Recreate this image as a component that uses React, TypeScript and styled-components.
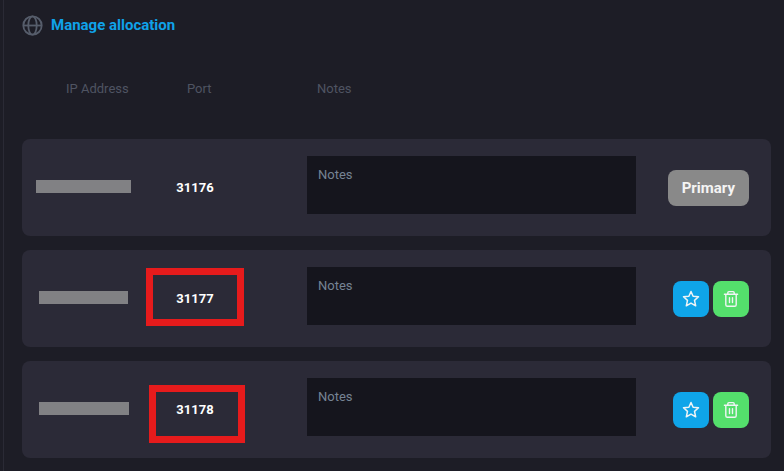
import React from "react";
import styled, { createGlobalStyle } from "styled-components";

const GlobalStyle = createGlobalStyle`
  * { box-sizing: border-box; }
  body {
    margin: 0;
    background: #1d1d26;
    color: #fff;
    font-family: Roboto, "Liberation Sans", sans-serif;
    font-size: 13px;
  }
`;

const Panel = styled.main`
  min-height: 100vh;
  margin-left: 3px;
  padding: 15px 13px 12px 18px;
  border-left: 1px solid #2a2a35;
`;

const Header = styled.header`
  display: flex;
  align-items: flex-start;
  gap: 8px;
  height: 21px;
  color: #565d6b;
`;

const Title = styled.h1`
  margin: 0;
  color: #0fa2e9;
  font-size: 15px;
  line-height: 20px;
  font-weight: 700;
`;

const Table = styled.table`
  display: block;
  margin-top: 43px;
`;

const TableHead = styled.thead`
  display: block;
`;

const TableBody = styled.tbody`
  display: flex;
  flex-direction: column;
  gap: 14px;
  margin-top: 40px;
`;

const Row = styled.tr`
  display: grid;
  grid-template-columns: 123px 100px minmax(0, 1fr) 135px;
`;

const Card = styled(Row)`
  align-items: center;
  min-height: 97px;
  border-radius: 8px;
  background: #2b2a37;
`;

const HeadCell = styled.th<{ $indent: number }>`
  padding: 0 0 0 ${(p) => p.$indent}px;
  color: #4f5462;
  font-weight: 400;
  line-height: 20px;
  text-align: left;
  white-space: nowrap;
`;

const AddressCell = styled.td`
  display: flex;
  justify-content: center;
  padding: 0;
`;

const MaskedAddress = styled.span<{ $width: number }>`
  width: ${(p) => p.$width}px;
  height: 13px;
  margin-bottom: 2px;
  background: #818184;
`;

const PortCell = styled.td`
  position: relative;
  padding: 0;
  font-weight: 700;
  line-height: 20px;
  text-align: center;
`;

const Highlight = styled.span<{ $top: number; $left: number; $width: number }>`
  position: absolute;
  top: ${(p) => p.$top}px;
  left: ${(p) => p.$left}px;
  width: ${(p) => p.$width}px;
  height: 58px;
  border: 7px solid #e61b1c;
  pointer-events: none;
`;

const NotesCell = styled.td`
  align-self: start;
  padding: 17px 0 0 62px;
`;

const Notes = styled.textarea`
  display: block;
  width: 100%;
  height: 58px;
  padding: 9px 11px;
  border: 0;
  border-radius: 0;
  background: #15151d;
  color: #fff;
  font: inherit;
  line-height: 20px;
  resize: none;

  &::placeholder {
    color: #758394;
    opacity: 1;
  }
`;

const ActionsCell = styled.td`
  display: flex;
  justify-content: flex-end;
  gap: 4px;
  padding: 1px 22px 0 0;
`;

const Button = styled.button`
  display: flex;
  align-items: center;
  justify-content: center;
  height: 36px;
  padding: 0;
  border: 0;
  border-radius: 8px;
`;

const PrimaryButton = styled(Button)`
  padding: 0 14px;
  background: #898989;
  color: #f4f4f4;
  font: 700 15px/20px Roboto, "Liberation Sans", sans-serif;
`;

const IconButton = styled(Button)<{ $color: string }>`
  width: 36px;
  background: ${(p) => p.$color};
  color: #f0f4f5;
`;

const GlobeIcon = () => (
  <svg width="21" height="21" viewBox="0 0 21 21" fill="none" stroke="currentColor" strokeWidth="1.8" aria-hidden="true">
    <circle cx="10.5" cy="10.5" r="9.2" />
    <ellipse cx="10.5" cy="10.5" rx="4.2" ry="9.2" />
    <path d="M1.3 10.5h18.4" />
  </svg>
);

const StarIcon = () => (
  <svg width="18" height="18" viewBox="0 0 18 18" fill="none" stroke="currentColor" strokeWidth="1.5" strokeLinejoin="round" aria-hidden="true">
    <path d="M9 1.5l2.1 4.7 5.4.6-4 3.6 1.2 5.4L9 13.1l-4.7 2.7 1.2-5.4-4-3.6 5.4-.6z" />
  </svg>
);

const TrashIcon = () => (
  <svg width="18" height="18" viewBox="0 0 18 18" fill="none" stroke="currentColor" strokeWidth="1.4" strokeLinecap="round" strokeLinejoin="round" aria-hidden="true">
    <path d="M2.4 4.3h13.2M5.8 4.1V2.7c0-.7.4-1.1 1.1-1.1h4.2c.7 0 1.1.4 1.1 1.1v1.4M3.8 4.5v10.2c0 1 .6 1.6 1.6 1.6h7.2c1 0 1.6-.6 1.6-1.6V4.5M7.5 7.6v5M10.5 7.6v5" />
  </svg>
);

type Allocation = {
  port: string;
  maskWidth: number;
  primary?: boolean;
  highlight?: { top: number; left: number; width: number };
};

const allocations: Allocation[] = [
  { port: "31176", maskWidth: 95, primary: true },
  { port: "31177", maskWidth: 89, highlight: { top: -21, left: 1, width: 98 } },
  { port: "31178", maskWidth: 90, highlight: { top: -15, left: 4, width: 96 } },
];

export default function App() {
  return (
    <>
      <GlobalStyle />
      <Panel>
        <Header>
          <GlobeIcon />
          <Title>Manage allocation</Title>
        </Header>
        <Table>
          <TableHead>
            <Row>
              <HeadCell $indent={44}>IP Address</HeadCell>
              <HeadCell $indent={42}>Port</HeadCell>
              <HeadCell $indent={72}>Notes</HeadCell>
            </Row>
          </TableHead>
          <TableBody>
            {allocations.map(({ port, maskWidth, primary, highlight }) => (
              <Card key={port}>
                <AddressCell>
                  <MaskedAddress $width={maskWidth} />
                </AddressCell>
                <PortCell>
                  {port}
                  {highlight && (
                    <Highlight $top={highlight.top} $left={highlight.left} $width={highlight.width} />
                  )}
                </PortCell>
                <NotesCell>
                  <Notes placeholder="Notes" aria-label={`Notes for port ${port}`} />
                </NotesCell>
                <ActionsCell>
                  {primary ? (
                    <PrimaryButton type="button">Primary</PrimaryButton>
                  ) : (
                    <>
                      <IconButton type="button" $color="#0fa5e9" aria-label={`Make ${port} primary`}>
                        <StarIcon />
                      </IconButton>
                      <IconButton type="button" $color="#54df6c" aria-label={`Delete ${port}`}>
                        <TrashIcon />
                      </IconButton>
                    </>
                  )}
                </ActionsCell>
              </Card>
            ))}
          </TableBody>
        </Table>
      </Panel>
    </>
  );
}
